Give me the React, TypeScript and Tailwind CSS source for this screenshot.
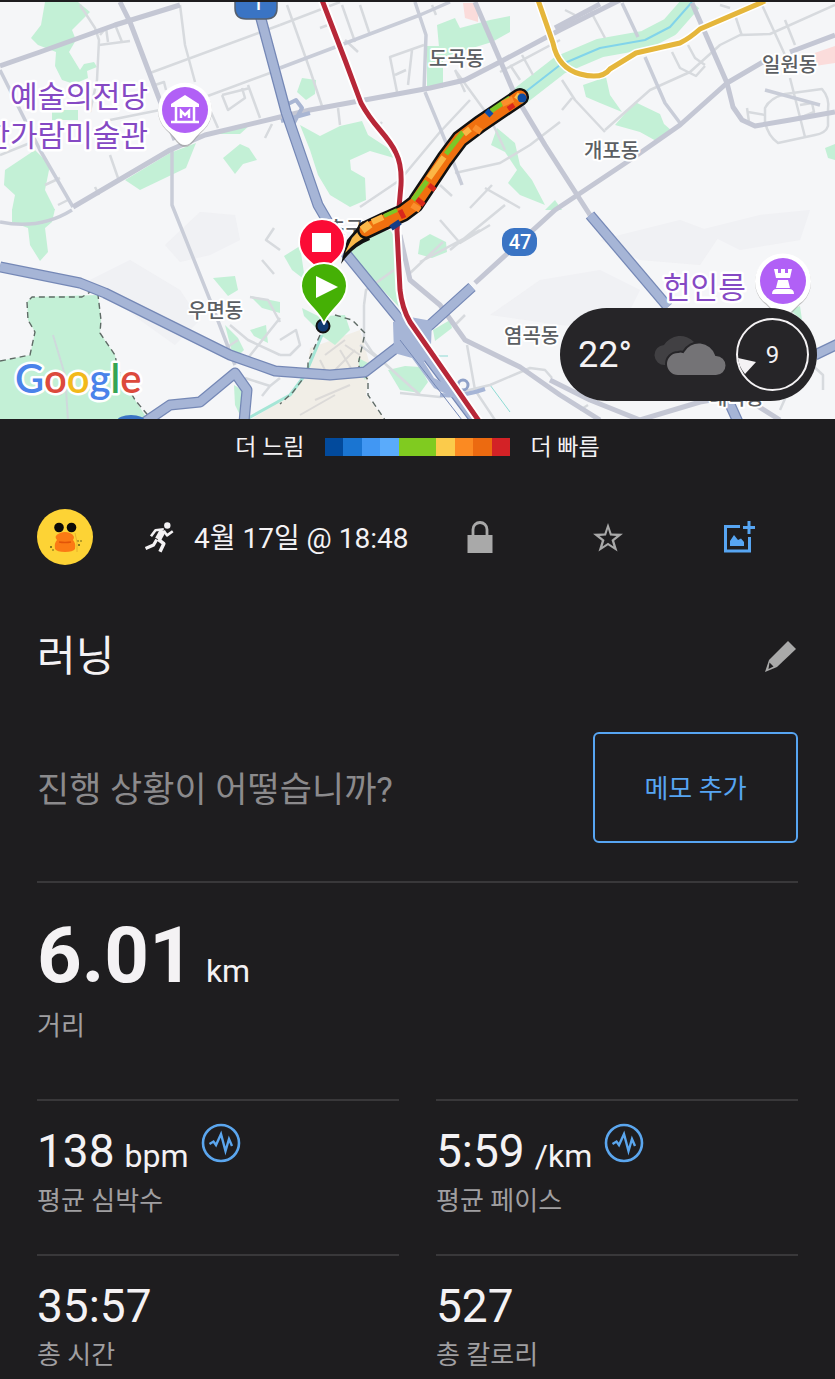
import React from "react";

interface Stat {
  value: string;
  unit?: string;
  label: string;
  chart?: boolean;
}

const stats: Stat[] = [
  { value: "138", unit: "bpm", label: "평균 심박수", chart: true },
  { value: "5:59", unit: "/km", label: "평균 페이스", chart: true },
  { value: "35:57", label: "총 시간" },
  { value: "527", label: "총 칼로리" },
];

const paceColors = [
  "bg-[#024a9c]",
  "bg-[#1a75d2]",
  "bg-[#4197f3]",
  "bg-[#5aabfb]",
  "bg-[#80cb20]",
  "bg-[#80cb20]",
  "bg-[#fbcb4b]",
  "bg-[#fb8a22]",
  "bg-[#ec6a10]",
  "bg-[#d32226]",
];

const parks = [
  "M45 2H78L90 12 72 30 76 40 69 52 80 70 84 64 94 62 97 67 87 71 88 78 74 84 62 80 55 66 56 52 38 45 31 38 41 25Z",
  "M52 110H78V120H52Z",
  "M5 170L35 150 50 165 45 190 55 210H12L15 195 4 185Z",
  "M125 180L170 153 196 143 186 168 140 190Z",
  "M223 158L240 144 249 148 257 160 243 164 235 174Z",
  "M212 134L250 125 240 134Z",
  "M12 209H55L52 222 45 228 48 252 40 261 30 245 28 228 12 222Z",
  "M0 361L30 355 35 332 28 320 27 302 32 297 98 295 101 320 100 333 115 355 118 370 135 400 148 420H0Z",
  "M213 278L235 276 238 290 228 296Z",
  "M250 296L280 302V313L262 308Z",
  "M250 330L266 325 268 343 254 336Z",
  "M225 325L238 338 244 350 234 360Z",
  "M234 385L242 390 240 415 235 405Z",
  "M300 125L320 136 340 126 362 121 368 135 388 148 394 158 370 151 350 160 351 170 365 178 366 200 350 207 330 195 318 175 310 150Z",
  "M437 25L455 18 460 28 490 20 510 16V32L492 42 440 58Z",
  "M427 46H443V88H427Z",
  "M302 78L316 80 315 94 306 100 297 92Z",
  "M497 128L515 143 520 165 532 180 545 205 520 195 508 183 517 170 505 152 491 145Z",
  "M583 85L606 77 610 95 622 112 600 103 586 97Z",
  "M615 125L635 102 660 114 664 124 672 131 658 142 640 132Z",
  "M825 148L835 144V160L828 158Z",
  "M555 200L562 210H545Z",
  "M360 236L390 230 397 240 400 308 378 285 355 265 350 250Z",
  "M284 256L300 246 305 280 292 270Z",
  "M302 308L322 318 318 330 304 316Z",
  "M420 240L430 234 446 242 447 252 432 258 418 254Z",
  "M388 370L405 366 420 367 428 382 420 393 400 390Z",
  "M325 316L345 315 350 330 335 345 322 336Z",
  "M433 330L450 320 452 328 435 341Z",
  "M358 358L372 365 365 380 360 372Z",
  "M790 310L800 306 802 320Z",
];

const minorRoads = [
  "M150 73L280 25M180 5L185 45 195 82M80 5L95 28 99 40 97 80 90 112M99 45L130 41M100 35L106 28 108 42M116 27L122 42",
  "M110 120L160 110M205 97L270 73M248 85L260 118M222 95L228 110 245 98 242 88M222 95L250 88M210 110L218 128M152 86L164 82 166 90",
  "M110 155L118 178M45 185L60 178M58 205L68 200M0 155L30 143M95 187L99 195M265 138L272 124",
  "M280 25L340 2M287 5L310 70 322 106M342 5L355 42M360 5L370 35M345 40L358 52M320 28L328 25M338 108L340 125M375 130L382 122",
  "M424 45L390 57 397 92M412 50L408 85M395 75L406 70M432 5L436 15M465 92L455 70M455 70L490 118 505 150M470 100L440 132 400 180 360 207",
  "M500 72L560 40M510 65L520 80M522 55L533 75M455 173L500 163 530 145 560 122M470 208L492 185M485 188L520 208M440 185L452 196",
  "M605 130L650 90 690 72 720 45 740 35 770 34 835 5M735 15L742 36M762 5L785 55M785 20L795 45M720 5L730 8M672 52L680 68 696 76 705 66M688 45L695 58 705 65",
  "M562 80L575 100 605 132M562 110L572 98M590 10L605 38M565 10L575 15M790 78L805 137M748 112L765 115M747 108L749 122M800 105L812 103 814 112 800 118",
  "M765 108Q770 98 785 94L822 89Q830 98 828 110V126Q826 133 815 135L778 143Q768 136 765 122Z",
  "M274 228L266 240 280 250M262 260L274 274M250 297L268 300 280 322M280 318L248 358M230 325L248 340 280 355M238 340L226 348M245 378L270 386 280 378M270 386L262 396",
  "M280 340L296 330 300 345 290 355H280M364 305V340L372 352 420 395M364 305L366 290 394 270M443 242L408 275M480 230L420 262M450 250L505 205M440 220L460 243 490 225",
  "M467 345L475 390 495 420M400 393L440 397 490 385 530 368 545 370 552 378M455 325L465 315M360 345L380 360",
  "M812 365L823 375V390M780 410L788 392M580 410L588 405",
];

const majorRoads = [
  "M0 66L40 52 115 25 180 5M120 2L130 22 152 80 175 140M73 207L170 150 205 135 280 117 310 110 430 88 465 80 500 62 560 30 620 0",
  "M475 2L500 60 515 95 545 145 590 215M692 3L727 83 733 107 742 120 755 126 790 120 835 112",
  "M763 62L727 83 680 125 630 160 555 210 475 283M790 52L835 35M555 28L600 4",
  "M400 235L410 280 440 305 465 340 520 367 560 395 600 420M550 380L590 400 640 420 700 402 740 395 780 420",
];

const midRoads = [
  "M0 70L40 150 73 207M280 68L420 15 450 2M415 2L426 35 424 90M425 92L447 145 462 185",
  "M622 3L638 37M645 57L665 103 680 123M172 150V205L210 300 235 365M0 222Q40 230 72 210M765 90L820 105",
];

const highways = [
  "M260 15L286 112 318 205 347 255 400 320 475 420",
  "M0 267L80 283 105 293 230 355 275 371 330 375 365 372 400 345 430 325 472 287",
  "M145 422L170 405 200 402 235 373 247 390 244 422",
  "M590 215L668 307",
  "M728 400L738 422M815 355L840 343",
];

const routePath = "M520 97L480 124 460 139 445 159 415 204 403 213 385 221 366 230";

const MapLabel = ({ x, y, children }: { x: number; y: number; children: string }) => (
  <text x={x} y={y} fontSize="20" fill="#5c5f63" stroke="#ffffff" strokeWidth="4" paintOrder="stroke">
    {children}
  </text>
);

const RouteMap: React.FC = () => (
  <svg viewBox="0 2 835 417" className="block w-full" role="img" aria-label="지도" strokeLinejoin="round">
    <rect width="835" height="420" fill="#f5f6f8" />
    <path
      d="M165 245L200 212 235 215 240 240 210 255 180 262ZM90 280L130 260 180 290 200 320 175 345 140 320ZM490 315L540 280 600 270 640 290 620 330 560 325ZM600 240L680 220 720 235 700 265 640 260ZM700 230L760 215 810 210 800 240 740 250Z"
      fill="#ececef"
      opacity="0.5"
    />
    <path d="M310 348L360 330 370 365 366 395 385 420H250L290 395 307 375Z" fill="#f1eee7" />
    <path d="M463 3H478V22L465 18ZM800 58L835 46V63L815 66Z" fill="#fbdcdb" />
    <g fill="#c3f0d6">
      {parks.map((d) => (
        <path key={d} d={d} />
      ))}
    </g>
    <g fill="none">
      <path d="M515 100L560 65 600 48 645 40 670 27 692 2" stroke="#c3f0d6" strokeWidth="19" />
      <path d="M515 100L560 65 600 48 645 40 670 27 692 2" stroke="#82d4ea" strokeWidth="2" />
      <path d="M322 335L305 375 290 395 245 420" stroke="#a5e6d6" strokeWidth="3" />
      <path d="M490 385L510 412M434 356H448" stroke="#8edbd4" strokeWidth="1" />
      <path d="M53 335L65 375 68 420M60 395L72 385" stroke="#cfd9dc" strokeWidth="2" />
      <path
        d="M325 355L345 340M330 375L355 350M315 400L350 385M300 415L335 395M340 350L352 370M320 360L330 380M345 345L360 355"
        stroke="#dcdad8"
        strokeWidth="2"
      />
      {minorRoads.map((d) => (
        <path key={d} d={d} stroke="#d7dade" strokeWidth="2.5" />
      ))}
      {midRoads.map((d) => (
        <path key={d} d={d} stroke="#c9cdd8" strokeWidth="3.5" />
      ))}
      {majorRoads.map((d) => (
        <path key={d} d={d} stroke="#c4c7d4" strokeWidth="5" />
      ))}
      <path
        d="M0 361L30 355 35 332 28 320 27 302 32 297 82 297 92 291 98 295 101 320 100 333 115 355 118 370 135 400 152 420M335 315L352 320 365 333 358 365 368 380V395L385 420M320 335L308 362V372L293 392 280 404"
        stroke="#5f6b66"
        strokeWidth="1.4"
        strokeDasharray="6 4"
      />
      <path d="M280 108L296 100 302 108 290 130M281 121L310 113" stroke="#a9b6d3" strokeWidth="4" />
      {highways.map((d) => (
        <path key={d} d={d} stroke="#7588b6" strokeWidth="11" />
      ))}
      {highways.map((d) => (
        <path key={d} d={d} stroke="#a6b5d6" strokeWidth="8.5" />
      ))}
    </g>
    <path d="M393 322L410 317 432 321 431 345 424 362 434 378 460 391 452 397 434 388 412 358 394 353Z" fill="#a6b5d6" />
    <circle cx="463" cy="385" r="5" fill="none" stroke="#8fa1c8" strokeWidth="3" />
    <path d="M440 395Q462 397 485 389" fill="none" stroke="#a6b5d6" strokeWidth="4" />
    <path d="M400 340L462 420" stroke="#7588b6" strokeWidth="1" />
    <g fill="none">
      <path d="M322 0L345 60 361 103Q368 116 380 130T396 153Q402 165 401 185L397 230 400 290Q402 308 410 322L479 421" stroke="#ffffff" strokeWidth="9" />
      <path d="M322 0L345 60 361 103Q368 116 380 130T396 153Q402 165 401 185L397 230 400 290Q402 308 410 322L479 421" stroke="#b72738" strokeWidth="5" />
      <path d="M538 0L553 43Q558 68 580 74T610 69L636 53 680 43Q690 38 700 29L765 1" stroke="#ffffff" strokeWidth="8" />
      <path d="M538 0L553 43Q558 68 580 74T610 69L636 53 680 43Q690 38 700 29L765 1" stroke="#e5b63b" strokeWidth="5" />
    </g>

    <g fontFamily="'Noto Sans CJK KR', sans-serif" fontWeight="500">
      <MapLabel x={429} y={66}>도곡동</MapLabel>
      <MapLabel x={762} y={72}>일원동</MapLabel>
      <MapLabel x={584} y={158}>개포동</MapLabel>
      <MapLabel x={188} y={318}>우면동</MapLabel>
      <MapLabel x={504} y={343}>염곡동</MapLabel>
      <MapLabel x={327} y={236}>초구</MapLabel>
      <MapLabel x={709} y={405}>내곡동</MapLabel>
      <g fontSize="30" fontWeight="400" fill="#8549c4" stroke="#ffffff" strokeWidth="5" paintOrder="stroke">
        <text x="10" y="107">예술의전당</text>
        <text x="148" y="146" textAnchor="end">한가람미술관</text>
        <text x="663" y="298">헌인릉</text>
      </g>
    </g>

    <path d="M363 221L370 240Q352 247 341 264L347 240Z" fill="#111111" />
    <path d="M365 224L368 236Q356 241 345 253L352 238Z" fill="#f9b84a" />
    <g fill="none" strokeLinecap="round">
      <path d={routePath} stroke="#111111" strokeWidth="18" />
      <path d={routePath} stroke="#f0700f" strokeWidth="13" />
    </g>
    <g fill="none">
      <path d="M510 98L491 111M463 132L446 154M427 181L413 200" stroke="#7cc728" strokeWidth="5" />
      <path d="M444 157L429 178M470 129L464 134M383 217L372 222" stroke="#fbb545" strokeWidth="6" />
      <path d="M397 210L384 216" stroke="#7cc728" strokeWidth="4" />
      <path d="M491 111L487 115" stroke="#0b4ea8" strokeWidth="7" />
      <path d="M508 109L514 105M429 185L435 190M417 199L424 205M400 210L404 218" stroke="#d9281c" strokeWidth="5" />
      <path d="M370 224L362 230" stroke="#f9b84a" strokeWidth="8" />
      <path d="M474 127L481 132M502 104L513 99M412 205L420 210" stroke="#fb8e2c" strokeWidth="6" />
      <path d="M516 95L524 101" stroke="#fbc24a" strokeWidth="6" />
      <path d="M391 228L400 222" stroke="#173d86" strokeWidth="6" />
    </g>
    <circle cx="522" cy="98" r="4.5" fill="#0d4ba0" />
    <circle cx="323" cy="326" r="6.5" fill="#113a70" stroke="#111111" strokeWidth="2" />

    <path d="M322 276C318 264 299 260 299 242A23 23 0 0 1 345 242C345 260 326 264 322 276Z" fill="#fb0b35" stroke="#ffffff" strokeWidth="2" />
    <rect x="312" y="233" width="19" height="19" fill="#ffffff" />
    <path d="M324 324C319 310 301 302 301 286A23 23 0 0 1 347 286C347 302 329 310 324 324Z" fill="#45b005" stroke="#ffffff" strokeWidth="2" />
    <path d="M316 276L338 287 316 298Z" fill="#ffffff" />

    <g>
      <path d="M185 147C178 147 176 139 166 130A27 27 0 1 1 204 130C194 139 192 147 185 147Z" fill="#9a9a9a" opacity="0.6" />
      <path d="M185 145C178 145 176 137 166 129A27 27 0 1 1 204 129C194 137 192 145 185 145Z" fill="#ffffff" />
      <circle cx="185" cy="110" r="23" fill="#b160f6" />
      <path d="M185 95L199 104V107H171V104Z" fill="#ffffff" />
      <path d="M176 107V121M194 107V121M171 122H199" stroke="#ffffff" strokeWidth="2.5" />
      <path d="M181 118V111L185 115 189 111V118" fill="none" stroke="#ffffff" strokeWidth="2.5" strokeLinejoin="miter" />
    </g>
    <g>
      <path d="M783 318C776 318 772 309 763 302A28 28 0 1 1 803 302C794 309 790 318 783 318Z" fill="#9a9a9a" opacity="0.6" />
      <path d="M783 316C776 316 772 307 763 301A28 28 0 1 1 803 301C794 307 790 316 783 316Z" fill="#ffffff" />
      <circle cx="783" cy="281" r="23" fill="#b160f6" />
      <path d="M774 269H778V273H781V269H785V273H788V269H792L790 278H776ZM778 280H788L790 288H776ZM772 294Q772 289 777 289H789Q794 289 794 294Z" fill="#ffffff" />
    </g>

    <path d="M235 0H277V8Q277 19 266 19H246Q235 19 235 8Z" fill="#3a74c4" stroke="#55606f" strokeWidth="1.5" />
    <rect x="502" y="228" width="35" height="28" rx="12" fill="#3a74c4" />
    <ellipse cx="131" cy="421" rx="14" ry="6" fill="#3a74c4" />
    <g fill="#ffffff" fontFamily="Roboto, sans-serif" fontWeight="500" textAnchor="middle" fontSize="19">
      <text x="258" y="10">1</text>
      <text x="520" y="249" fontSize="20">47</text>
    </g>

    <text x="15" y="393" fontFamily="Lato, sans-serif" fontSize="40" fontWeight="600" stroke="#ffffff" strokeWidth="5" paintOrder="stroke">
      <tspan fill="#4a83ea">G</tspan>
      <tspan fill="#dc4a3d">o</tspan>
      <tspan fill="#f2b91a">o</tspan>
      <tspan fill="#4a83ea">g</tspan>
      <tspan fill="#35a554">l</tspan>
      <tspan fill="#dc4a3d">e</tspan>
    </text>
  </svg>
);

const Weather: React.FC = () => (
  <div className="absolute right-[18px] bottom-[18px] flex h-[93px] w-[257px] items-center rounded-full bg-[#262528] pl-[18px] text-[#f4f2f4]">
    <span className="w-[76px] text-4xl">22°</span>
    <svg viewBox="0 0 72 42" className="h-[42px] w-[72px]">
      <path d="M11 31A10 10 0 0 1 10 11 19 19 0 0 1 40 8L30 31Z" fill="#414043" />
      <path d="M24 42A12 12 0 0 1 24 18Q27 17 29 18A18 18 0 0 1 62 21 10 10 0 0 1 62 42Z" fill="#747376" stroke="#262528" strokeWidth="2" />
    </svg>
    <div className="relative ml-2.5 flex size-[73px] items-center justify-center rounded-full border-2 border-[#f4f2f4] text-2xl">
      9
      <svg viewBox="0 0 73 73" className="absolute -inset-0.5 size-[73px]">
        <path d="M2 40L20 44 9 56Q3 49 2 40Z" fill="#f4f2f4" />
      </svg>
    </div>
  </div>
);

const DuckAvatar = () => (
  <svg viewBox="0 0 56 56" className="size-14" role="img" aria-label="프로필">
    <circle cx="28" cy="28" r="28" fill="#fdd335" />
    <circle cx="22" cy="18.500" r="4.800" fill="#0c0b08" />
    <circle cx="34.500" cy="18.500" r="4.800" fill="#0c0b08" />
    <path d="M23 24Q28 22 33 24 39 27 36 31 39 34 38 40 36 43 28 43T18 40Q17 34 20 31 16 27 23 24Z" fill="#fb7a14" />
    <path d="M22 33Q28 34 34 33" fill="none" stroke="#e25408" strokeWidth="1.5" />
    <g fill="#5e5a16">
      <circle cx="14" cy="38" r="1" />
      <circle cx="16" cy="41" r="0.8" />
      <circle cx="41" cy="32" r="0.8" />
      <circle cx="44" cy="32" r="0.8" />
      <circle cx="42" cy="36" r="1" />
    </g>
    <path d="M38 24Q41 33 40 43" fill="none" stroke="#e0a92b" strokeWidth="0.8" />
  </svg>
);

const RunnerIcon = () => (
  <svg viewBox="0 0 90 100" className="h-8 w-[30px]" fill="none" stroke="#f4f2f4" strokeLinejoin="round">
    <circle cx="71" cy="14" r="10" fill="#f4f2f4" stroke="none" />
    <path d="M57 30L42 57" strokeWidth="20" />
    <path d="M60 26L34 29 20 48" strokeWidth="8" />
    <path d="M60 30L70 45 88 32" strokeWidth="8" />
    <path d="M38 58L28 75 3 86" strokeWidth="10" />
    <path d="M42 57L60 71 48 96" strokeWidth="11" />
  </svg>
);

const LockIcon = () => (
  <svg viewBox="0 0 26 32" className="h-8 w-[26px]">
    <path d="M6 14V8.500A7 7 0 0 1 20 8.500V14" fill="none" stroke="#a9a9a9" strokeWidth="2.800" />
    <path d="M0.500 14H25.500V32H0.500Z" fill="#a9a9a9" />
  </svg>
);

const StarIcon = () => (
  <svg viewBox="0 0 30 29" className="h-[29px] w-[30px]">
    <path
      d="M15 0L18.600 10.400 30 10.800 21.200 17.700 24.500 28.500 15 22.200 5.500 28.500 8.800 17.700 0 10.800 11.400 10.400ZM15 6L13 12.600 6.500 13 11.500 17 9.500 23.500 15 19.700 20.500 23.500 18.500 17 23.500 13 17 12.600Z"
      fill="#a9a9a9"
      fillRule="evenodd"
    />
  </svg>
);

const AddPhotoIcon = () => (
  <svg viewBox="0 0 32 32" className="size-8">
    <path d="M17 5.500H2.500V30H26.500V16" fill="none" stroke="#57a5f2" strokeWidth="3" />
    <path d="M26 0V13M20 6.500H32" stroke="#57a5f2" strokeWidth="3" />
    <path d="M7 25V20L11 14 15 19 18 17.500 21 21V25Z" fill="#57a5f2" />
  </svg>
);

const PencilIcon = () => (
  <svg viewBox="0 0 31 31" className="size-[31px]">
    <path d="M23 0L31 8 12 26 0 31 4 19Z" fill="#a9a9a9" />
    <path d="M4.500 21.500L8.500 25.500 3.500 28Z" fill="#1e1d1f" />
  </svg>
);

const ChartIcon = () => (
  <svg viewBox="0 0 40 40" className="size-10" fill="none" stroke="#5ba6ee">
    <circle cx="20" cy="20" r="18" strokeWidth="2.600" />
    <path d="M8.500 21L12.500 18.500 15 22 20 11 24.500 28 28 16 31 23" strokeWidth="2.400" />
  </svg>
);

const App: React.FC = () => {
  return (
    <main className="min-h-screen bg-[#1e1d1f] pt-0.5 font-[Roboto,'Noto_Sans_CJK_KR',sans-serif] text-[#f4f2f4]">
      <section className="relative">
        <RouteMap />
        <Weather />
      </section>

      <div className="flex h-14 items-center justify-center gap-5 text-[23px]">
        <span className="pt-0.5">더 느림</span>
        <div className="flex h-[18px] w-[186px]">
          {paceColors.map((color, i) => (
            <div key={i} className={`flex-1 ${color}`} />
          ))}
        </div>
        <span className="pt-0.5">더 빠름</span>
      </div>

      <div className="px-[37px]">
        <header className="flex h-[124px] items-center">
          <DuckAvatar />
          <div className="ml-[51px] flex flex-1 items-center gap-5 text-[28px]">
            <RunnerIcon />
            <span className="pt-1">4월 17일 @ 18:48</span>
          </div>
          <div className="flex items-center gap-[100px] pr-[43px]">
            <button aria-label="개인정보">
              <LockIcon />
            </button>
            <button aria-label="즐겨찾기">
              <StarIcon />
            </button>
            <button aria-label="사진 추가">
              <AddPhotoIcon />
            </button>
          </div>
        </header>

        <div className="flex h-[110px] items-center justify-between pt-1">
          <h1 className="text-[42px]">러닝</h1>
          <button aria-label="이름 편집" className="pr-0.5">
            <PencilIcon />
          </button>
        </div>

        <div className="flex items-center justify-between border-b-2 border-[#39383a] pt-[23px] pb-[38px]">
          <p className="pt-2 text-[35px] text-[#8b8a8c]">진행 상황이 어떻습니까?</p>
          <button className="h-[111px] w-[205px] rounded-md border-2 border-[#57a5f2] pt-1 text-[26px] text-[#57a5f2]">
            메모 추가
          </button>
        </div>

        <div className="h-[216px] pt-[26px]">
          <p className="flex items-baseline gap-3">
            <span className="text-[78px] leading-[94px] font-bold">6.01</span>
            <span className="text-[32px]">km</span>
          </p>
          <p className="text-[26px] leading-[46px] text-[#a09fa1]">거리</p>
        </div>

        <div className="grid grid-cols-2 gap-x-[37px]">
          {stats.map((stat) => (
            <div key={stat.label} className="h-[155px] border-t-2 border-[#39383a] pt-[22px]">
              <div className="flex items-start gap-3">
                <p className="flex items-baseline gap-2.5">
                  <span className="text-[46px] leading-[56px]">{stat.value}</span>
                  {stat.unit && <span className="text-[32px]">{stat.unit}</span>}
                </p>
                {stat.chart && (
                  <button aria-label={`${stat.label} 차트`}>
                    <ChartIcon />
                  </button>
                )}
              </div>
              <p className="text-[26px] leading-[42px] text-[#a09fa1]">{stat.label}</p>
            </div>
          ))}
        </div>
      </div>
    </main>
  );
};

export default App;
